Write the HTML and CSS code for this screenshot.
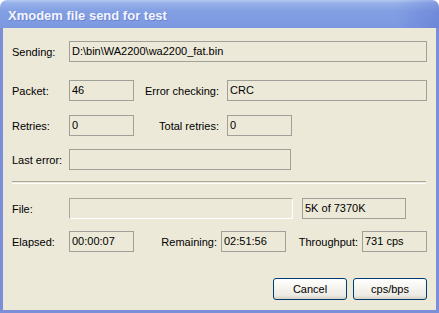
FILE: index.html
```html
<!DOCTYPE HTML>
<html>
<head>
<meta charset="UTF-8" />
<title>Xmodem file send for test</title>
<link rel="stylesheet" href="styles.css">
</head>
<body>
<div class="window">
	<div class="titlebar">Xmodem file send for test</div>
	<div class="client">
		<div class="row rowSending">
			<span class="lbl first">Sending:</span>
			<span class="field wide">D:\bin\WA2200\wa2200_fat.bin</span>
		</div>

		<div class="row rowPacket">
			<span class="lbl first">Packet:</span>
			<span class="field small">46</span>
			<span class="lbl right mid">Error checking:</span>
			<span class="field wide">CRC</span>
		</div>

		<div class="row rowRetries">
			<span class="lbl first">Retries:</span>
			<span class="field small">0</span>
			<span class="lbl right mid">Total retries:</span>
			<span class="field small">0</span>
		</div>

		<div class="row rowError">
			<span class="lbl first">Last error:</span>
			<span class="field error"></span>
		</div>

		<div class="separator"></div>

		<div class="row rowFile">
			<span class="lbl first">File:</span>
			<span class="progress"></span>
			<span class="field size">5K of 7370K</span>
		</div>

		<div class="row rowTime">
			<span class="lbl first">Elapsed:</span>
			<span class="field small">00:00:07</span>
			<span class="lbl right remain">Remaining:</span>
			<span class="field small">02:51:56</span>
			<span class="lbl right through">Throughput:</span>
			<span class="field small">731 cps</span>
		</div>

		<div class="buttons">
			<button class="btn">Cancel</button>
			<button class="btn">cps/bps</button>
		</div>
	</div>
</div>
</body>
</html>
```

FILE: styles.css
```css
html,
body {
	margin: 0;
	padding: 0;
	background: #fff;
}

.window {
	width: 439px;
	height: 313px;
	display: flex;
	flex-direction: column;
	font-family: "Liberation Sans", Arial, sans-serif;
	font-size: 11px;
	color: #000;
}

.titlebar {
	flex: 0 0 auto;
	height: 28px;
	box-sizing: border-box;
	padding: 4px 0 0 8px;
	line-height: 24px;
	border-radius: 7px 7px 0 0;
	background: linear-gradient(to right, rgba(0, 0, 0, 0) 90%, rgba(60, 80, 190, 0.25) 100%),
		linear-gradient(to bottom, #b3cbf2 0, #97b1ea 3px, #839fe3 40%, #7c98e0 100%);
	font-size: 13px;
	font-weight: bold;
	color: #f2f5fd;
	text-shadow: 1px 1px 0 #6a83d2;
}

.client {
	flex: 1 1 auto;
	background-color: #ece9d8;
	border: 3px solid #7b8fd8;
	border-top: none;
	padding: 13px 9px 0 9px;
	display: flex;
	flex-direction: column;
}

.row {
	display: flex;
	align-items: center;
	height: 21px;
}

.rowPacket {
	margin-top: 18px;
}

.rowRetries {
	margin-top: 14px;
}

.rowError {
	margin-top: 13px;
}

.rowFile {
	margin-top: 14px;
}

.rowTime {
	margin-top: 12px;
}

.lbl {
	flex: 0 0 auto;
	white-space: nowrap;
}

.first {
	width: 57px;
}

.right {
	text-align: right;
	box-sizing: border-box;
}

.mid {
	width: 93px;
	padding-right: 8px;
}

.remain {
	width: 87px;
	padding-right: 4px;
}

.through {
	width: 76px;
	padding-right: 4px;
}

.field {
	flex: 0 0 auto;
	box-sizing: border-box;
	height: 21px;
	line-height: 19px;
	padding-left: 2px;
	border: 1px solid #a09f98;
	white-space: nowrap;
}

.wide {
	flex: 1 1 auto;
}

.small {
	width: 65px;
}

.error {
	width: 222px;
}

.size {
	width: 104px;
	margin-left: 9px;
}

.progress {
	flex: 0 0 auto;
	box-sizing: border-box;
	width: 224px;
	height: 21px;
	border: 1px solid #fff;
	border-top-color: #aca899;
	border-left-color: #aca899;
}

.separator {
	margin-top: 11px;
	height: 1px;
	border-top: 1px solid #aca899;
	border-bottom: 1px solid #fff;
	margin-right: 1px;
}

.buttons {
	margin-top: 26px;
	display: flex;
	justify-content: flex-end;
	gap: 6px;
}

.btn {
	width: 74px;
	height: 22px;
	padding: 0;
	font-family: "Liberation Sans", Arial, sans-serif;
	font-size: 11px;
	color: #000;
	border: 1px solid #003c74;
	border-radius: 3px;
	background: linear-gradient(to bottom, #ffffff 0, #f6f5f0 40%, #ecebe5 80%, #d8d2c6 100%);
}
```
